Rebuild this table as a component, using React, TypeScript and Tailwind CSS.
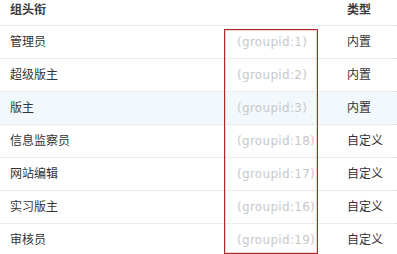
import React from "react";

type Group = { name: string; gid: number; kind: string; hover?: boolean };

const groups: Group[] = [
  { name: "管理员", gid: 1, kind: "内置" },
  { name: "超级版主", gid: 2, kind: "内置" },
  { name: "版主", gid: 3, kind: "内置", hover: true },
  { name: "信息监察员", gid: 18, kind: "自定义" },
  { name: "网站编辑", gid: 17, kind: "自定义" },
  { name: "实习版主", gid: 16, kind: "自定义" },
  { name: "审核员", gid: 19, kind: "自定义" },
];

const cjk = "font-['DejaVu_Sans','Noto_Sans_CJK_SC',sans-serif]";

export default function App() {
  return (
    <div className={`relative h-[254px] w-[397px] overflow-hidden bg-white text-[12px] text-[#333] ${cjk}`}>
      <div className="flex h-[26px] border-b border-dotted border-[#cfdbe3] pl-[10px] pt-[1px] font-bold text-[#3a3a3a]">
        <div className="w-[337px] leading-[18px]">组头衔</div>
        <div className="leading-[18px]">类型</div>
      </div>
      {groups.map((g) => (
        <div
          key={g.gid}
          className={`flex h-[33px] items-center border-b border-dotted border-[#cfdbe3] pl-[10px] ${
            g.hover ? "bg-[#f2f8fb]" : "bg-white"
          }`}
        >
          <div className="w-[227px]">{g.name}</div>
          <div className="w-[110px] tracking-[0.3px] text-[#c8c8c8]">(groupid:{g.gid})</div>
          <div>{g.kind}</div>
        </div>
      ))}
      <div className="pointer-events-none absolute left-[224px] top-[29px] h-[225px] w-[94px] border border-[#a82a2a] shadow-[inset_0_0_0_1px_#f3cfcf]" />
    </div>
  );
}
